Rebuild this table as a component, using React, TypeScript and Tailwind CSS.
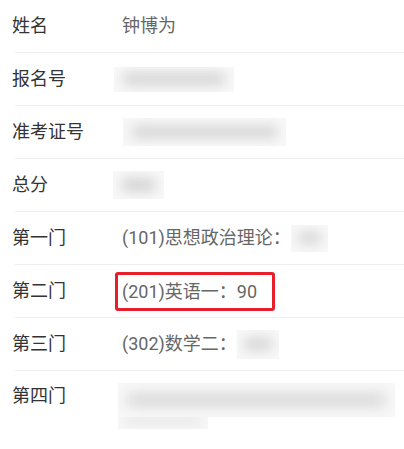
const font = { fontFamily: 'Roboto, "Noto Sans CJK SC", sans-serif' };

function Row({ label, children, last }: { label: string; children?: React.ReactNode; last?: boolean }) {
  return (
    <div>
      <div
        className={
          last
            ? 'flex items-start pl-[12px] pt-[12px] h-[78px]'
            : 'flex items-center pl-[12px] h-[52px]'
        }
      >
        <div className="w-[110px] shrink-0 text-[18px] leading-[26px] text-[#333]">{label}</div>
        <div className="flex items-center text-[18px] leading-[26px] text-[#666]">{children}</div>
      </div>
      {!last && <div className="ml-[15px] h-px bg-[#efefef]" />}
    </div>
  );
}

export default function App() {
  return (
    <div className="w-[404px] h-[449px] bg-white overflow-hidden" style={font}>
      <Row label="姓名">钟博为</Row>
      <Row label="报名号">
        <div className="-ml-[8px] w-[120px] h-[25px] bg-[#f8f8f8] overflow-hidden flex items-center px-[8px]">
          <div className="w-full h-[14px] rounded-full bg-[#d8d8d8] blur-[6px]" />
        </div>
      </Row>
      <Row label="准考证号">
        <div className="ml-[1px] w-[163px] h-[28px] bg-[#f8f8f8] overflow-hidden flex items-center px-[8px]">
          <div className="w-full h-[14px] rounded-full bg-[#d8d8d8] blur-[6px]" />
        </div>
      </Row>
      <Row label="总分">
        <div className="-ml-[9px] w-[51px] h-[28px] bg-[#f8f8f8] overflow-hidden flex items-center px-[8px]">
          <div className="w-full h-[14px] rounded-full bg-[#d4d4d4] blur-[6px]" />
        </div>
      </Row>
      <Row label="第一门">
        <span>(101)思想政治理论：</span>
        <div className="w-[37px] h-[27px] bg-[#f8f8f8] overflow-hidden flex items-center px-[6px]">
          <div className="w-full h-[14px] rounded-full bg-[#dadada] blur-[6px]" />
        </div>
      </Row>
      <Row label="第二门">
        <div className="-ml-[7px] mt-[1px] w-[160px] h-[39px] border-[3px] border-[#e61f2b] rounded-[3px] flex items-center pl-[4px] whitespace-nowrap">
          (201)英语一：90
        </div>
      </Row>
      <Row label="第三门">
        <span>(302)数学二：</span>
        <div className="w-[42px] h-[29px] bg-[#f8f8f8] overflow-hidden flex items-center px-[6px]">
          <div className="w-full h-[14px] rounded-full bg-[#d8d8d8] blur-[6px]" />
        </div>
      </Row>
      <Row label="第四门" last>
        <div className="-ml-[4px] flex flex-col">
          <div className="w-[277px] h-[34px] bg-[#f8f8f8] overflow-hidden flex items-center px-[8px]">
            <div className="w-full h-[14px] rounded-full bg-[#d8d8d8] blur-[7px]" />
          </div>
          <div className="w-[90px] h-[12px] bg-[#f6f6f6] overflow-hidden px-[8px]">
            <div className="w-full h-[6px] rounded-full bg-[#e6e6e6] blur-[4px]" />
          </div>
        </div>
      </Row>
    </div>
  );
}
